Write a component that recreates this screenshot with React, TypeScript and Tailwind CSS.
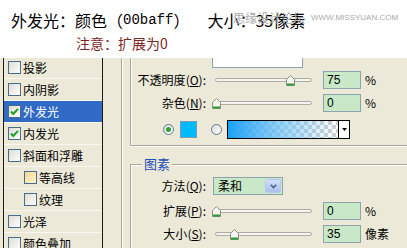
import React from "react";

// 图层样式 - 外发光 面板截图
const cjk = "font-['Noto_Sans_CJK_SC',sans-serif]";

const layers = [
  { name: "投影", checked: false, indent: false },
  { name: "内阴影", checked: false, indent: false },
  { name: "外发光", checked: true, indent: false, selected: true },
  { name: "内发光", checked: true, indent: false },
  { name: "斜面和浮雕", checked: false, indent: false },
  { name: "等高线", checked: false, indent: true, hover: true },
  { name: "纹理", checked: false, indent: true },
  { name: "光泽", checked: false, indent: false },
  { name: "颜色叠加", checked: false, indent: false },
];

const CheckBox = ({ checked, hover }: { checked: boolean; hover?: boolean }) => (
  <div
    className={
      "flex h-[13px] w-[13px] shrink-0 items-center justify-center border border-[#4a6c8c] " +
      (hover
        ? "bg-linear-to-br from-[#f7d98a] to-[#fdf3d6]"
        : "bg-linear-to-br from-[#dedcd3] to-white")
    }
  >
    {checked && (
      <svg width="9" height="9" viewBox="0 0 9 9">
        <path d="M1 4.5 L3.3 7 L8 1.8" fill="none" stroke="#21a121" strokeWidth="2" />
      </svg>
    )}
  </div>
);

const Thumb = () => (
  <svg width="9" height="11" viewBox="0 0 9 11">
    <path d="M0.5 4.5 L4.5 0.5 L8.5 4.5 V10.5 H0.5 Z" fill="#f5f5f0" stroke="#8e8e84" />
    <path d="M1 9.5 H8" stroke="#2f9a3a" strokeWidth="2" />
  </svg>
);

const Slider = ({ pos }: { pos: number }) => (
  <div className="relative ml-[6px] flex h-[11px] w-[103px] items-center">
    <div className="mx-[3px] h-[4px] w-full rounded-full border border-[#aeaca2] bg-[#f6f5f0]" />
    <div className="absolute top-0" style={{ left: pos }}>
      <Thumb />
    </div>
  </div>
);

const Label = ({ text, hot }: { text: string; hot: string }) => (
  <div className={`w-[75px] text-right text-[12px] leading-[18px] text-black ${cjk}`}>
    {text}(<span className="underline">{hot}</span>):
  </div>
);

const Field = ({ value }: { value: string }) => (
  <div className="ml-[8px] h-[18px] w-[38px] border border-[#8ea3ae] bg-[#c9e8c8] pl-[3px] font-['Liberation_Sans',sans-serif] text-[12px] leading-[16px] text-black">
    {value}
  </div>
);

const SliderRow = ({
  text,
  hot,
  pos,
  value,
  unit,
  className,
}: {
  text: string;
  hot: string;
  pos: number;
  value: string;
  unit: string;
  className: string;
}) => (
  <div className={`flex h-[18px] items-center ${className}`}>
    <Label text={text} hot={hot} />
    <Slider pos={pos} />
    <Field value={value} />
    <div className={`ml-[4px] text-[12px] text-black ${cjk}`}>{unit}</div>
  </div>
);

const Radio = ({ on }: { on?: boolean }) => (
  <div className="flex h-[11px] w-[11px] shrink-0 items-center justify-center rounded-full border border-[#5d7896] bg-linear-to-br from-[#dcdcd6] to-white">
    {on && <div className="h-[5px] w-[5px] rounded-full bg-[#2fa33a]" />}
  </div>
);

export default function App() {
  return (
    <div className="relative h-[248px] w-[407px] overflow-hidden bg-white">
      {/* 标题说明 */}
      <div className={`h-[58px] pl-[11px] pt-[9px] ${cjk}`}>
        <div className="flex items-center text-[16px] leading-[22px] text-black">
          <span>外发光：颜色（</span>
          <span className="font-['Liberation_Mono',monospace] text-[14px]">00baff</span>
          <span>）</span>
          <span className="ml-[18px]">大小：35像素</span>
        </div>
        <div className="ml-[65px] mt-[3px] text-[14px] leading-[18px] text-[#7d2626]">注意：扩展为0</div>
      </div>

      {/* 水印 */}
      <div className="absolute left-[233px] top-[11px] flex items-center gap-[6px] text-[#a9a9a9]">
        <span className={`text-[12px] leading-[14px] ${cjk}`}>思缘设计论坛</span>
        <span className="font-['Liberation_Sans',sans-serif] text-[8px] leading-[14px]">WWW.MISSYUAN.COM</span>
      </div>

      {/* 面板 */}
      <div className="flex h-[190px] overflow-hidden bg-[#ece9d8]">
        <div className="ml-[3px] w-[100px] shrink-0 border-x border-[#1b1b1b]">
          <div className="-mt-[1px]">
            {layers.map((l) => (
              <div
                key={l.name}
                className={
                  "flex h-[22px] items-center gap-[2px] border-b border-[#f8f7f1] " +
                  (l.indent ? "pl-[20px] " : "pl-[4px] ") +
                  (l.selected ? "bg-[#316ac5] text-white" : "text-black")
                }
              >
                <CheckBox checked={l.checked} hover={l.hover} />
                <span className={`text-[12px] leading-[16px] ${cjk}`}>{l.name}</span>
              </div>
            ))}
          </div>
        </div>

        <div className="ml-[18px] w-[2px] shrink-0 border-l border-[#aca899] bg-white" />

        <div className="ml-[7px] flex flex-1 flex-col">
          {/* 结构 */}
          <div className="flex h-[88px] flex-col border-b border-l border-[#aca899] shadow-[inset_1px_0_0_#fff,0_1px_0_#fff]">
            <div className="ml-[81px] h-[10px] w-[91px] border-x border-b border-[#8ea3ae] bg-white" />
            <SliderRow text="不透明度" hot="O" pos={74} value="75" unit="%" className="mt-[3px]" />
            <SliderRow text="杂色" hot="N" pos={0} value="0" unit="%" className="mt-[5px]" />
            <div className="mt-[8px] flex h-[18px] items-center">
              <div className="ml-[32px]">
                <Radio on />
              </div>
              <div className="ml-[6px] h-[17px] w-[17px] border border-[#7c9bb0] bg-[#00baff]" />
              <div className="ml-[14px]">
                <Radio />
              </div>
              <div className="ml-[5px] flex h-[19px] w-[123px] border border-black">
                <div className="h-full flex-1 bg-[repeating-conic-gradient(#cfcfcf_0_25%,#ffffff_0_50%)] bg-[length:8px_8px]">
                  <div className="h-full w-full bg-linear-to-r from-[#18a2f7] via-[#6cc3f8]/70 to-transparent" />
                </div>
                <div className="flex w-[11px] items-center justify-center border-l border-black bg-white">
                  <svg width="5" height="3" viewBox="0 0 5 3">
                    <path d="M0 0 H5 L2.5 3 Z" fill="#000" />
                  </svg>
                </div>
              </div>
            </div>
          </div>

          {/* 图素 */}
          <div className="relative mt-[18px] flex flex-1 flex-col border-l border-t border-[#aca899] shadow-[inset_1px_1px_0_#fff]">
            <div className={`absolute -top-[9px] left-[11px] bg-[#ece9d8] px-[2px] text-[13px] leading-[16px] text-[#1f4fb8] ${cjk}`}>
              图素
            </div>
            <div className="mt-[12px] flex h-[18px] items-center">
              <Label text="方法" hot="Q" />
              <div className="ml-[7px] flex h-[18px] w-[70px] border border-[#8ea3ae] bg-[#c9e8c8]">
                <span className={`flex-1 pl-[4px] text-[12px] leading-[16px] text-black ${cjk}`}>柔和</span>
                <div className="m-[1px] flex w-[16px] items-center justify-center rounded-[2px] border border-[#b7c9ef] bg-linear-to-b from-[#d3e0fb] to-[#a9bfee]">
                  <svg width="7" height="5" viewBox="0 0 7 5">
                    <path d="M0.8 0.8 L3.5 3.6 L6.2 0.8" fill="none" stroke="#4c6188" strokeWidth="1.6" />
                  </svg>
                </div>
              </div>
            </div>
            <SliderRow text="扩展" hot="P" pos={0} value="0" unit="%" className="mt-[7px]" />
            <SliderRow text="大小" hot="S" pos={18} value="35" unit="像素" className="mt-[5px]" />
          </div>
        </div>
      </div>
    </div>
  );
}
